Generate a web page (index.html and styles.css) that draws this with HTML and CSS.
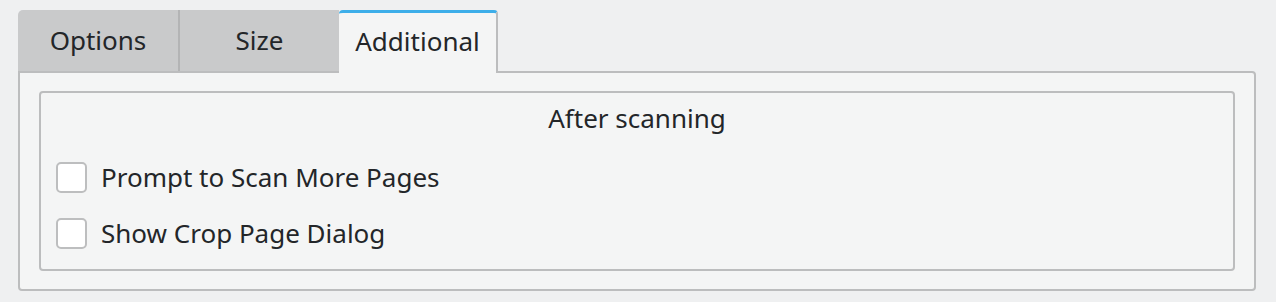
FILE: index.html
```html
<!DOCTYPE html>
<html>
<head>
<meta charset="utf-8">
<link rel="stylesheet" href="styles.css">
</head>
<body>
<div class="tabwidget">
  <div class="tabbar">
    <div class="tab tab-options">Options</div>
    <div class="tab tab-size">Size</div>
    <div class="tab tab-active">Additional</div>
  </div>
  <div class="panel">
    <div class="group">
      <div class="group-title">After scanning</div>
      <label class="check-row"><span class="checkbox"></span><span class="check-label">Prompt to Scan More Pages</span></label>
      <label class="check-row"><span class="checkbox"></span><span class="check-label">Show Crop Page Dialog</span></label>
    </div>
  </div>
</div>
</body>
</html>
```

FILE: styles.css
```css
html, body {
  margin: 0;
  padding: 0;
  background: #eff0f1;
  width: 1276px;
  height: 302px;
  overflow: hidden;
}
body {
  font-family: "Noto Sans", "Open Sans", sans-serif;
  font-size: 26px;
  color: #232629;
}
.tabwidget {
  padding: 10px 20px 0 18px;
}
.tabbar {
  display: flex;
  height: 61px;
  position: relative;
  z-index: 1;
}
.tab {
  box-sizing: border-box;
  display: flex;
  align-items: center;
  justify-content: center;
  height: 61px;
  background: #c9cacb;
  padding-bottom: 1px;
}
.tab-options {
  width: 162px;
  border-top-left-radius: 5px;
  border-right: 2px solid #b3b4b5;
}
.tab-size {
  width: 159px;
}
.tab-active {
  width: 159px;
  height: 63px;
  background: #f4f5f5;
  border-top: 3px solid #3daee9;
  border-right: 2px solid #bcbdbe;
  border-top-left-radius: 4px;
  border-top-right-radius: 4px;
  padding-bottom: 5px;
  margin-bottom: -2px;
}
.panel {
  box-sizing: border-box;
  height: 220px;
  background: #f4f5f5;
  border: 2px solid #bcbdbe;
  border-radius: 0 4px 4px 4px;
  padding: 18px 19px 0 19px;
}
.group {
  box-sizing: border-box;
  height: 180px;
  border: 2px solid #bcbdbe;
  border-radius: 4px;
  padding: 6px 15px 0 15px;
}
.group-title {
  text-align: center;
  height: 38px;
  line-height: 38px;
  margin-bottom: 12px;
}
.check-row {
  display: flex;
  align-items: center;
  height: 56px;
}
.checkbox {
  box-sizing: border-box;
  width: 31px;
  height: 31px;
  background: #ffffff;
  border: 2px solid #bdbebf;
  border-radius: 5px;
  margin-right: 14px;
  flex: none;
}
.check-label {
  line-height: 31px;
}
```
